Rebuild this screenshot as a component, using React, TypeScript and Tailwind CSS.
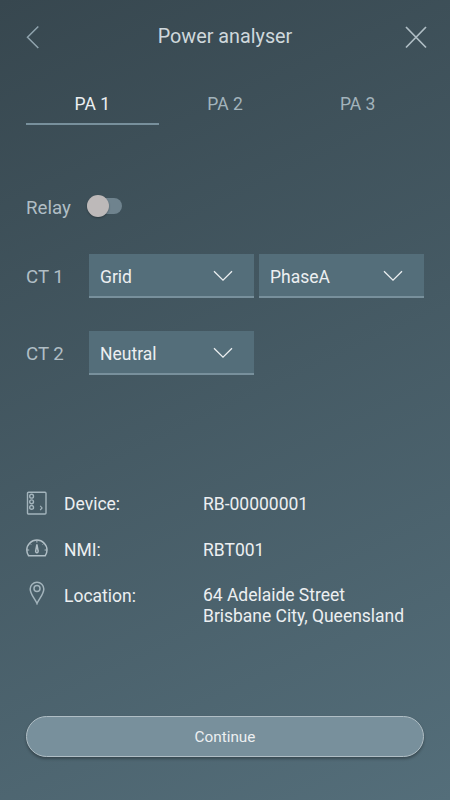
import { useState } from "react"
import clsx from "clsx"

const tabs = ["PA 1", "PA 2", "PA 3"]

function ChevronDown() {
  return (
    <svg width="20" height="12" viewBox="0 0 20 12" fill="none" stroke="#eceff1" strokeWidth="1.3">
      <path d="M1 1.3l9 8.8 9-8.8" />
    </svg>
  )
}

function DeviceIcon() {
  return (
    <svg width="22" height="24" viewBox="0 0 22 24" fill="none" stroke="#a3b4bc" strokeWidth="1.4">
      <rect x="1.5" y="1.2" width="18.5" height="21.8" rx="1" />
      <circle cx="5.6" cy="5.2" r="1.9" />
      <circle cx="5.6" cy="10.8" r="1.9" />
      <circle cx="5.6" cy="16.4" r="1.9" />
      <path d="M14.2 14.9l1.9 2.1-1.9 2" strokeWidth="1.1" />
    </svg>
  )
}

function MeterIcon() {
  return (
    <svg width="22" height="18" viewBox="0 0 22 18" fill="none" stroke="#b0bec5" strokeWidth="1.5">
      <path d="M2.6 16.8C1.3 15 .8 13.2 .8 11.1a10.1 10.1 0 0 1 20.2 0c0 2.1-.5 3.9-1.8 5.7z" />
      <path d="M10.9 1v2.6M1 11h2.2M18.6 11h2.2M3.7 4.2l1.4 1.4M18.1 4.2l-1.4 1.4" strokeWidth="1" />
      <path d="M10.9 5.3l-1.2 6.5a1.25 1.5 0 1 0 2.4 0z" strokeWidth="1.5" />
    </svg>
  )
}

function PinIcon() {
  return (
    <svg width="16" height="24" viewBox="0 0 16 24" fill="none" stroke="#a3b4bc" strokeWidth="1.5">
      <path d="M8 22.6C6.3 18 1.2 13.5 1.2 8a6.8 6.8 0 0 1 13.6 0c0 5.5-5.1 10-6.800 14.600z" />
      <circle cx="8" cy="7.6" r="3" />
    </svg>
  )
}

function SelectBox({ value }: { value: string }) {
  return (
    <button className="flex h-11 w-[165px] items-center justify-between border-b-2 border-[#78909c] bg-[#546e7a] pt-[5px] pr-[21px] pl-[11px] text-[17.5px] text-[#eceff1]">
      <span>{value}</span>
      <span className="-mt-1">
        <ChevronDown />
      </span>
    </button>
  )
}

export default function App() {
  const [activeTab, setActiveTab] = useState("PA 1")
  const [relay, setRelay] = useState(false)

  return (
    <div className="flex h-[800px] w-[450px] flex-col overflow-hidden bg-[linear-gradient(155deg,#37474f,#546e7a)] px-[26px] font-['Roboto',sans-serif] text-[#eceff1]">
      <header className="flex h-[74px] shrink-0 items-center justify-between">
        <button aria-label="Back" className="w-[19px]">
          <svg width="14" height="24" viewBox="0 0 14 24" fill="none" stroke="#90a4ae" strokeWidth="1.5">
            <path d="M12.3 1.5L1.5 12.2l10.8 10.8" />
          </svg>
        </button>
        <h1 className="text-[19.8px] leading-6 text-[#cfd8dc]">Power analyser</h1>
        <button aria-label="Close" className="-mr-[3px]">
          <svg width="22" height="24" viewBox="0 0 22 24" fill="none" stroke="#b0bec5" strokeWidth="1.7">
            <path d="M1 2l20 20.5M21 2l-20 20.5" />
          </svg>
        </button>
      </header>

      <nav className="mt-[10px] grid h-[41px] shrink-0 grid-cols-3">
        {tabs.map((tab) => (
          <button
            key={tab}
            onClick={() => setActiveTab(tab)}
            className={clsx(
              "border-b-2 pt-[2px] text-[17.5px]",
              activeTab === tab ? "border-[#78909c] text-[#eceff1]" : "border-transparent text-[#a3b4bc]"
            )}
          >
            {tab}
          </button>
        ))}
      </nav>

      <section className="mt-[69px] shrink-0 text-[18.7px] text-[#b0bec5]">
        <div className="flex h-6 items-center">
          <span className="w-[61px] pt-[4px]">Relay</span>
          <button
            role="switch"
            aria-checked={relay}
            aria-label="Relay"
            onClick={() => setRelay(!relay)}
            className={clsx("flex h-4 w-[35px] items-center rounded-full bg-[#6f838e]", relay && "justify-end")}
          >
            <span className="size-[22px] shrink-0 rounded-full bg-[#bdb9b9] shadow-[0_1px_2px_rgba(0,0,0,0.3)]" />
          </button>
        </div>
        <div className="mt-[36px] flex h-11 items-center">
          <span className="w-[63px] pt-[3px]">CT 1</span>
          <div className="flex gap-[5px]">
            <SelectBox value="Grid" />
            <SelectBox value="PhaseA" />
          </div>
        </div>
        <div className="mt-[33px] flex h-11 items-center">
          <span className="w-[63px] pt-[3px]">CT 2</span>
          <SelectBox value="Neutral" />
        </div>
      </section>

      <dl className="mt-[117px] grid shrink-0 grid-cols-[38px_139px_1fr] gap-y-[22px] text-[17.5px] leading-6">
        <dt className="contents">
          <span className="-mt-px">
            <DeviceIcon />
          </span>
          <span>Device:</span>
        </dt>
        <dd>RB-00000001</dd>
        <dt className="contents">
          <span className="pt-px">
            <MeterIcon />
          </span>
          <span>NMI:</span>
        </dt>
        <dd>RBT001</dd>
        <dt className="contents">
          <span className="-mt-[3px] pl-[3px]">
            <PinIcon />
          </span>
          <span>Location:</span>
        </dt>
        <dd className="pt-px leading-[21px] tracking-[-0.02px]">
          64 Adelaide Street
          <br />
          Brisbane City, Queensland
        </dd>
      </dl>

      <button className="mt-auto mb-[43px] h-[41px] shrink-0 rounded-full border border-[#b0bec5] bg-[#78909c] pt-[2px] text-[15.3px] shadow-[0_2px_3px_rgba(0,0,0,0.3)]">
        Continue
      </button>
    </div>
  )
}
